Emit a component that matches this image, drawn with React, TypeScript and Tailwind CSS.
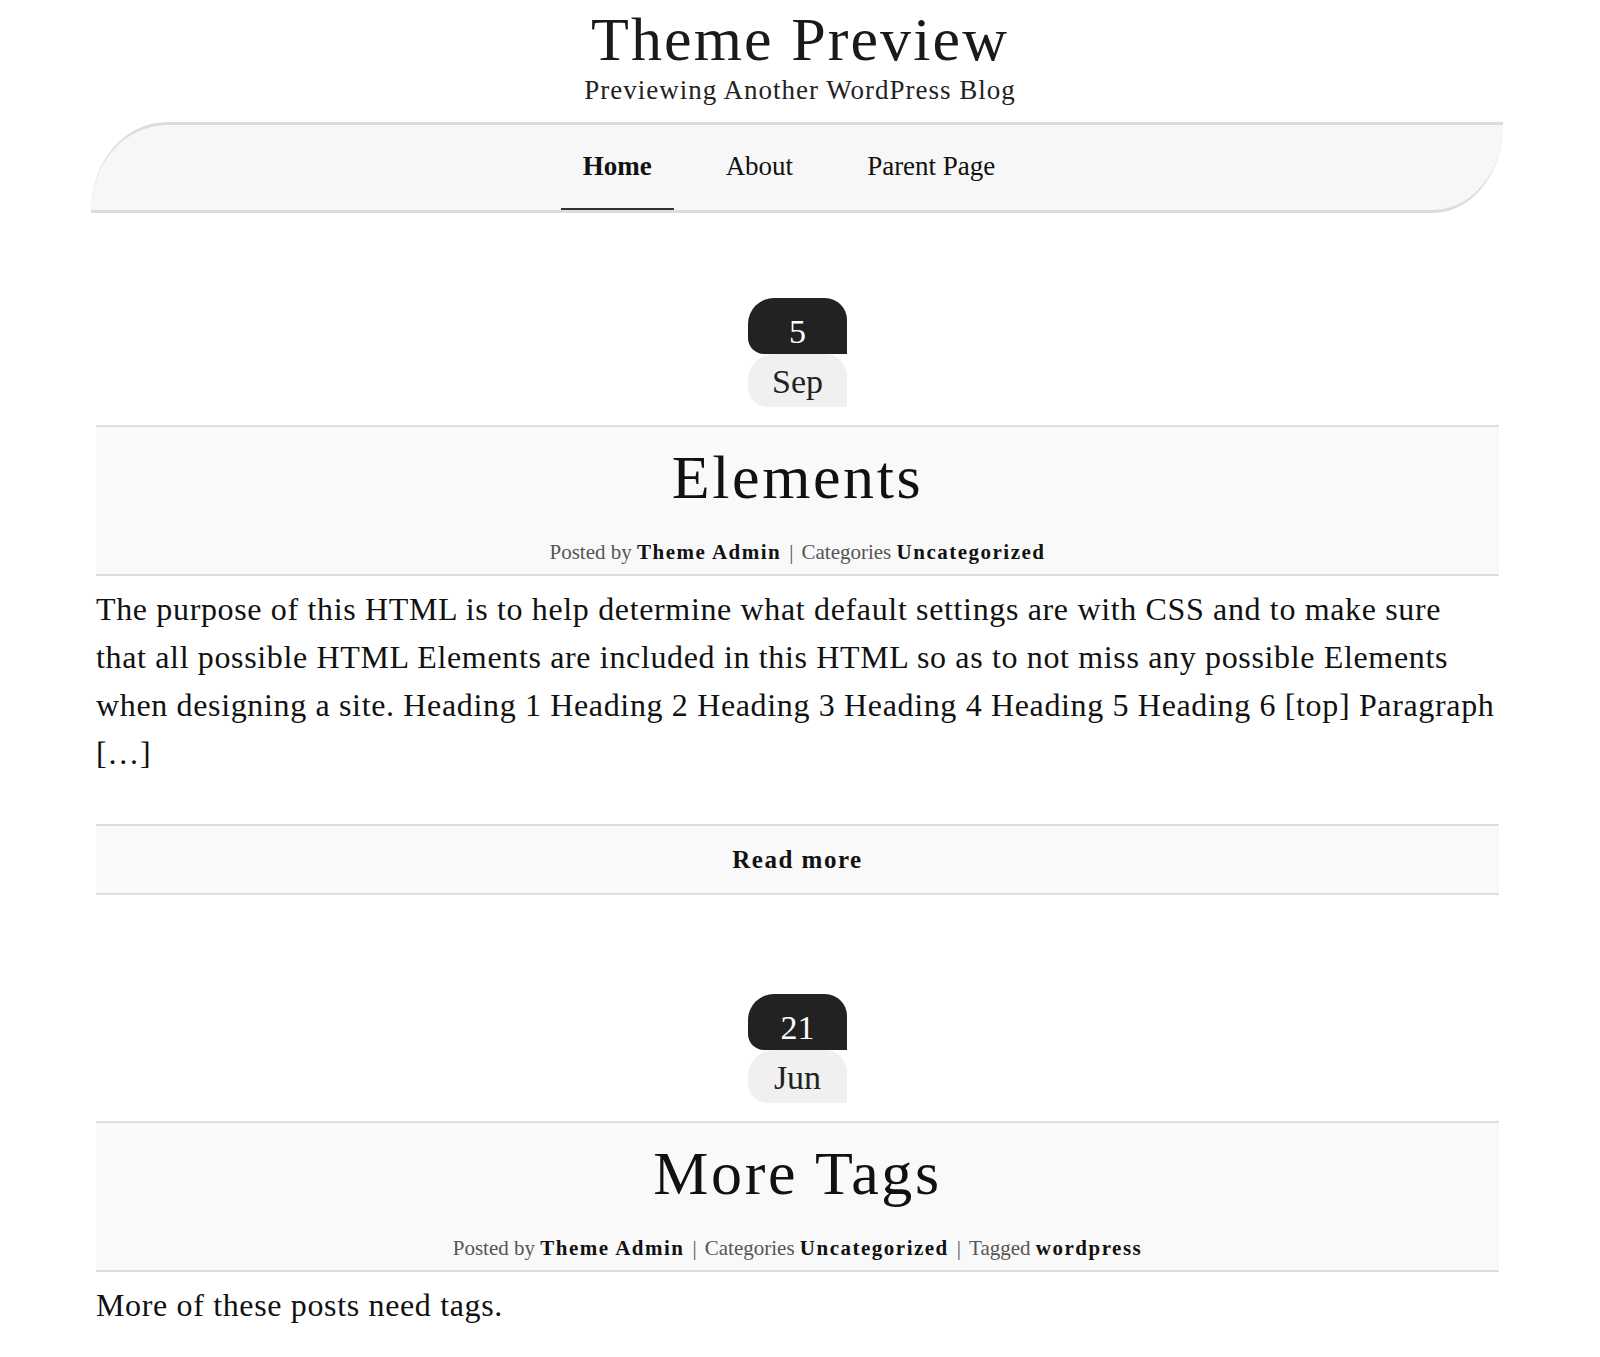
const serif = "font-['Liberation_Serif',serif]"

type Post = {
  day: string
  month: string
  title: string
  tags?: string
  lines: string[]
  more?: boolean
}

const posts: Post[] = [
  {
    day: "5",
    month: "Sep",
    title: "Elements",
    lines: [
      "The purpose of this HTML is to help determine what default settings are with CSS and to make sure",
      "that all possible HTML Elements are included in this HTML so as to not miss any possible Elements",
      "when designing a site. Heading 1 Heading 2 Heading 3 Heading 4 Heading 5 Heading 6 [top] Paragraph",
      "[…]",
    ],
    more: true,
  },
  {
    day: "21",
    month: "Jun",
    title: "More Tags",
    tags: "wordpress",
    lines: ["More of these posts need tags."],
  },
]

function DateBadge({ day, month }: { day: string; month: string }) {
  return (
    <div className="mx-auto flex w-[99px] flex-col">
      {/* day block */}
      <div className="flex h-[56px] items-center justify-center rounded-tl-[26px] rounded-tr-[22px] rounded-bl-[16px] bg-[#222] pt-[12px] text-[34px] leading-none text-white">
        {day}
      </div>
      {/* month block */}
      <div className="flex h-[53px] items-center justify-center rounded-tl-[26px] rounded-tr-[22px] rounded-bl-[20px] bg-[#f0f0f0] pt-[3px] text-[34px] leading-none text-[#222]">
        {month}
      </div>
    </div>
  )
}

function Meta({ tags }: { tags?: string }) {
  return (
    <div className="mt-[34px] text-[21px] leading-[21px] text-[#555]">
      Posted by <b className="font-bold tracking-[1.5px] text-[#111]">Theme Admin</b>
      <span className="mx-[8px]">|</span>
      Categories <b className="font-bold tracking-[1.5px] text-[#111]">Uncategorized</b>
      {tags && (
        <>
          <span className="mx-[8px]">|</span>
          Tagged <b className="font-bold tracking-[1.5px] text-[#111]">{tags}</b>
        </>
      )}
    </div>
  )
}

function PostItem({ post }: { post: Post }) {
  return (
    <article className="flex flex-col">
      <DateBadge day={post.day} month={post.month} />
      <header className="mt-[18px] flex flex-col items-center border-y-2 border-[#dedede] bg-[#f9f9f9] pt-[19px] pb-[11px]">
        <h2 className="text-[62px] leading-[62px] tracking-[2.6px] text-[#111]">{post.title}</h2>
        <Meta tags={post.tags} />
      </header>
      <p className="mt-[9px] text-[32px] leading-[48px] tracking-[0.65px] whitespace-nowrap text-[#111]">
        {post.lines.map((l, i) => (
          <span key={i}>
            {l}
            {i < post.lines.length - 1 && <br />}
          </span>
        ))}
      </p>
      {post.more && (
        <a
          href="#"
          className="mt-[47px] flex h-[71px] items-center justify-center border-y-2 border-[#dedede] bg-[#f9f9f9] text-[25px] font-bold tracking-[1.5px] text-[#111]"
        >
          Read more
        </a>
      )}
    </article>
  )
}

export default function App() {
  return (
    <div className={`${serif} min-h-[1357px] bg-white text-[#222]`}>
      {/* Site title */}
      <div className="flex flex-col items-center pt-[8px]">
        <h1 className="text-[62px] leading-[62px] tracking-[2.1px] text-[#1a1a1a]">Theme Preview</h1>
        <p className="mt-[7px] text-[27px] leading-[27px] tracking-[1px] text-[#222]">Previewing Another WordPress Blog</p>
      </div>

      {/* Nav */}
      <nav className="mt-[18px] ml-[91px] flex h-[91px] w-[1412px] justify-center rounded-tl-[76px_88px] rounded-br-[70px_88px] border-y-[3px] border-[#dcdcdc] bg-[#f7f7f7]">
        <div className="flex gap-[30px] pr-[16px]">
          <a href="#" className="border-b-2 border-[#333] px-[22px] pt-[28px] text-[27px] leading-[27px] font-bold text-[#111]">
            Home
          </a>
          <a href="#" className="px-[22px] pt-[28px] text-[27px] leading-[27px] text-[#111]">
            About
          </a>
          <a href="#" className="px-[22px] pt-[28px] text-[27px] leading-[27px] text-[#111]">
            Parent Page
          </a>
        </div>
      </nav>

      {/* Posts */}
      <main className="mt-[85px] ml-[96px] flex w-[1403px] flex-col gap-[99px]">
        {posts.map((p) => (
          <PostItem key={p.title} post={p} />
        ))}
      </main>
    </div>
  )
}
